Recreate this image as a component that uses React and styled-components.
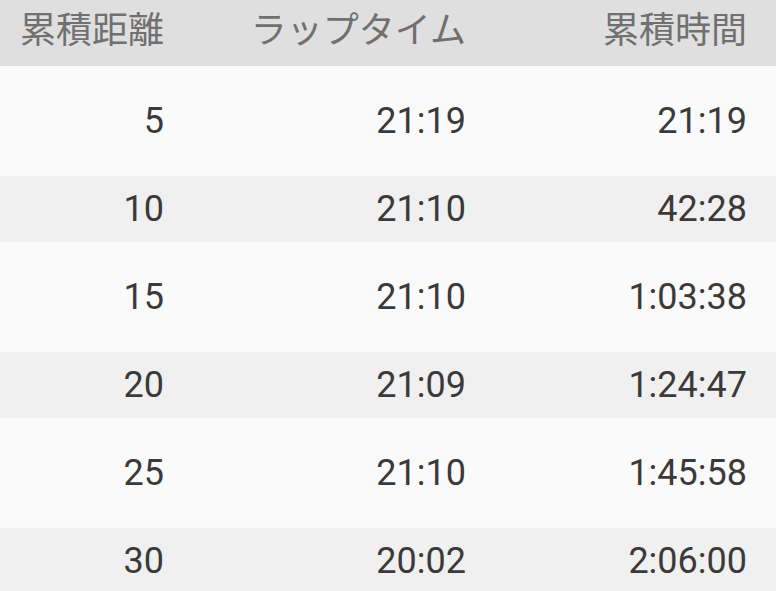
import React from "react";
import styled, { createGlobalStyle } from "styled-components";

const Global = createGlobalStyle`
  html, body { margin: 0; padding: 0; background: #fafafa; }
  body { font-family: Roboto, "Noto Sans CJK JP", sans-serif; }
`;

const Table = styled.div`
  width: 776px;
  display: flex;
  flex-direction: column;
`;

const Row = styled.div`
  display: grid;
  grid-template-columns: 164px 302px 281px;
  padding-right: 29px;
  align-items: center;
  height: ${(p) => p.$h}px;
  background: ${(p) => p.$bg};
`;

const HeadCell = styled.div`
  text-align: right;
  font-size: 36px;
  line-height: 1;
  color: #707070;
  font-family: "Noto Sans CJK JP", sans-serif;
  margin-top: -13px;
  white-space: nowrap;
`;

const Cell = styled.div`
  text-align: right;
  font-size: 36px;
  line-height: 1;
  color: #3a3a3a;
  font-family: Roboto, sans-serif;
  white-space: nowrap;
`;

const data = [
  ["5", "21:19", "21:19"],
  ["10", "21:10", "42:28"],
  ["15", "21:10", "1:03:38"],
  ["20", "21:09", "1:24:47"],
  ["25", "21:10", "1:45:58"],
  ["30", "20:02", "2:06:00"],
];

export default function App() {
  return (
    <>
      <Global />
      <Table>
        <Row $h={66} $bg="#dfdfdf">
          <HeadCell>累積距離</HeadCell>
          <HeadCell>ラップタイム</HeadCell>
          <HeadCell>累積時間</HeadCell>
        </Row>
        {data.map((r, i) => (
          <Row key={i} $h={i % 2 === 0 ? 110 : 66} $bg={i % 2 === 0 ? "#fafafa" : "#f0f0f0"}>
            {r.map((c, j) => (
              <Cell key={j}>{c}</Cell>
            ))}
          </Row>
        ))}
      </Table>
    </>
  );
}
